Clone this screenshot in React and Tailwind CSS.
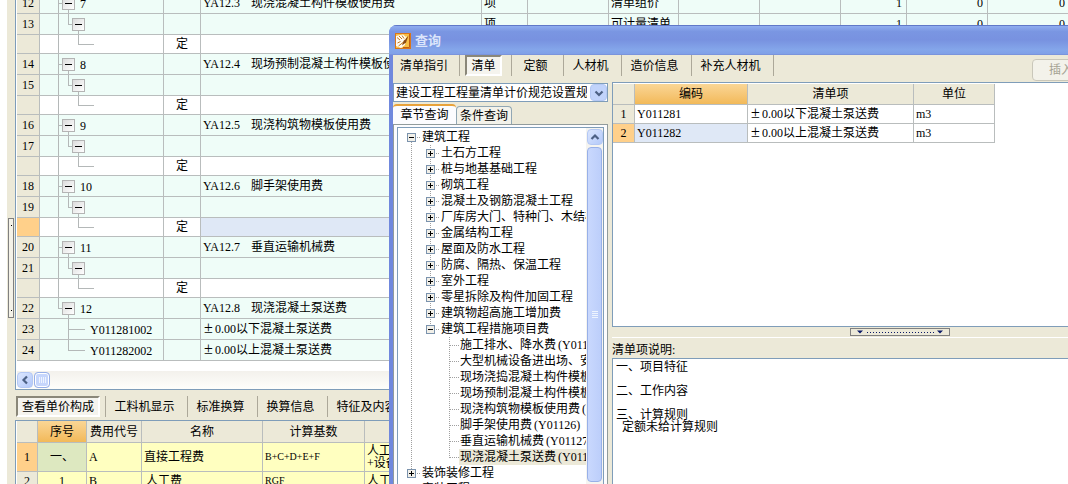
import React from "react";

const LINE = "border-[#b9bdbd]";

const TREE = "stroke-[#b4b8b8]";

function Minus({ className = "" }) {
  return (
    <button
      type="button"
      aria-label="折叠"
      className={`flex size-[13px] shrink-0 items-center justify-center border border-[#b4b4b4] bg-gradient-to-br from-[#dcdcdc] to-white ${className}`}
    >
      <span className="h-px w-[7px] bg-black" />
    </button>
  );
}

function GroupCell({ label, last }) {
  return (
    <div className="relative flex h-5 items-center pl-[3px]">
      <svg className="absolute -left-px top-0 h-5 w-6" shapeRendering="crispEdges" fill="none" aria-hidden="true">
        <path className={TREE} d={last ? "M0.5 0V10.5H4M10.5 16V21" : "M0.5 0V21M0 10.5H4M10.5 16V21"} />
      </svg>
      <Minus className="relative" />
      <span className="ml-[5px] pt-0.5">{label}</span>
    </div>
  );
}

function SubCell() {
  return (
    <div className="relative flex h-5 items-center pl-[13px]">
      <svg className="absolute -left-px top-0 h-5 w-8" shapeRendering="crispEdges" fill="none" aria-hidden="true">
        <path className={TREE} d="M0.5 0V21M10.5 0V10.5H14M20.5 16V21" />
      </svg>
      <Minus className="relative" />
    </div>
  );
}

function StemCell() {
  return (
    <svg className="-ml-px block h-[18px] w-10" shapeRendering="crispEdges" fill="none" aria-hidden="true">
      <path className={TREE} d="M0.5 0V18M20.5 0V9.5H36" />
    </svg>
  );
}

function LeafCell({ label, last }) {
  return (
    <div className="relative flex h-5 items-center pl-[31px]">
      <svg className="absolute -left-px top-0 h-5 w-8" shapeRendering="crispEdges" fill="none" aria-hidden="true">
        <path className={TREE} d={last ? "M10.5 0V10.5H27" : "M10.5 0V21M10.5 10.5H27"} />
      </svg>
      <span className="pt-0.5">{label}</span>
    </div>
  );
}

const PLUS_MINUS = <span className="inline-block w-3 pl-px text-[16px] leading-3">±</span>;

const groups = [
  [12, 7, 13, "YA12.3", "现浇混凝土构件模板使用费"],
  [14, 8, 15, "YA12.4", "现场预制混凝土构件模板使用费"],
  [16, 9, 17, "YA12.5", "现浇构筑物模板使用费"],
  [18, 10, 19, "YA12.6", "脚手架使用费"],
  [20, 11, 21, "YA12.7", "垂直运输机械费"],
];

const rows = groups.flatMap(([a, n, b, code, name], i) => [
  { no: a, kind: "group", label: n, code, name, mode: "清单组价" },
  { no: b, kind: "sub", mode: "可计量清单" },
  { kind: "stem", selected: i === 3 },
]);
rows.push({ no: 22, kind: "group", label: 12, code: "YA12.8", name: "现浇混凝土泵送费", last: true, mode: "清单组价" });
rows.push({ no: 23, kind: "leaf", label: "Y011281002", plain: "0.00以下混凝土泵送费", mode: "可计量清单" });
rows.push({ no: 24, kind: "leaf", label: "Y011282002", plain: "0.00以上混凝土泵送费", last: true, mode: "可计量清单" });

function MainRow({ r }) {
  const stem = r.kind === "stem";
  const h = stem ? "h-[19px]" : "h-[21px]";
  const cell = `border-b border-r ${LINE} p-0`;
  return (
    <tr className={`${h} ${stem ? "bg-white" : "bg-[#effdf8]"}`}>
      <th className={`${cell} font-normal ${r.selected ? "bg-[#ffd08a]" : "bg-[#ece9d8]"}`}>{r.no}</th>
      <td className={`border-b ${LINE} p-0`} />
      <td className={cell}>
        {r.kind === "group" && <GroupCell label={r.label} last={r.last} />}
        {r.kind === "sub" && <SubCell />}
        {stem && <StemCell />}
        {r.kind === "leaf" && <LeafCell label={r.label} last={r.last} />}
      </td>
      <td className={`${cell} text-center`}>{stem ? "定" : ""}</td>
      <td className={`${cell} pl-0.5 ${r.selected ? "bg-[#dfe8f6]" : ""}`}>
        {r.code && (
          <span className="flex">
            <span className="w-12">{r.code}</span>
            {r.name}
          </span>
        )}
        {r.plain && <>{PLUS_MINUS}{r.plain}</>}
      </td>
      <td className={`${cell} pl-0.5`}>{stem ? "" : "项"}</td>
      <td className={cell} />
      <td className={`${cell} pl-0.5`}>{r.mode}</td>
      <td className={cell} />
      <td className={cell} />
      <td className={`${cell} pr-1 text-right`}>{stem ? "" : 1}</td>
      <td className={`${cell} pr-1 text-right`}>{stem ? "" : 0}</td>
      <td className={`${cell} pr-1 text-right`}>{stem ? "" : 0}</td>
    </tr>
  );
}

function MainGrid() {
  return (
    <div className="flex h-[390px] shrink-0 flex-col overflow-hidden border-b border-l border-[#7f9db9] bg-white pl-px">
      <div className="min-h-0 flex-1 overflow-hidden">
        <table className="-mt-[7px] w-[1053px] table-fixed border-separate border-spacing-0">
          <colgroup>
            <col className="w-[23px]" />
            <col className="w-[19px]" />
            <col className="w-[105px]" />
            <col className="w-[37px]" />
            <col className="w-[281px]" />
            <col className="w-[46px]" />
            <col className="w-[81px]" />
            <col className="w-[70px]" />
            <col className="w-[81px]" />
            <col className="w-[81px]" />
            <col className="w-[66px]" />
            <col className="w-[81px]" />
            <col className="w-[82px]" />
          </colgroup>
          <tbody>
            {rows.map((r, i) => (
              <MainRow key={i} r={r} />
            ))}
          </tbody>
        </table>
      </div>
      <div className="flex h-[18px] items-center gap-px bg-gradient-to-b from-[#f3f1ec] to-[#fefefb]">
        <ScrollButton dir="left" />
        <span className="flex size-4 items-center justify-center gap-px rounded-sm border border-[#98b0e8] bg-[#c6d6fc] ring-1 ring-inset ring-white">
          {[0, 1, 2, 3].map((i) => (
            <i key={i} className="h-1.5 w-px bg-[#eef4fe]" />
          ))}
        </span>
      </div>
    </div>
  );
}

const ARROWS = {
  left: "M9 3.5L5.5 7L9 10.5",
  up: "M3.5 9L7 5.5L10.5 9",
  down: "M3.5 5.5L7 9L10.5 5.5",
};

function ScrollButton({ dir }) {
  return (
    <button
      type="button"
      aria-label={dir}
      className="flex size-4 shrink-0 items-center justify-center rounded-sm border border-[#b4c8f4] bg-gradient-to-br from-[#dbe6fe] to-[#b4c9f9]"
    >
      <svg className="size-[14px]" viewBox="0 0 14 14" fill="none" stroke="#4d6185" strokeWidth="2.2" aria-hidden="true">
        <path d={ARROWS[dir]} />
      </svg>
    </button>
  );
}

function BarItem({ children, active, className }) {
  return (
    <div className={`flex h-[21px] items-center justify-center border-r border-[#aca899] pr-1 ${className}`}>
      <button
        type="button"
        className={`h-full whitespace-nowrap ${
          active ? "border-2 border-[#8a8779] border-r-white border-b-white bg-[#f5f4ee] px-1" : ""
        }`}
      >
        {children}
      </button>
    </div>
  );
}

function PriceTabs() {
  return (
    <div className="flex h-[30px] shrink-0 items-end pb-[3px]">
      <BarItem active className="w-[91px]">查看单价构成</BarItem>
      <BarItem className="w-[82px]">工料机显示</BarItem>
      <BarItem className="w-[70px]">标准换算</BarItem>
      <BarItem className="w-[70px]">换算信息</BarItem>
      <BarItem className="w-[82px]">特征及内容</BarItem>
    </div>
  );
}

function PriceGrid() {
  const head = `border-b border-r ${LINE} bg-[#ece9d8] p-0 font-normal`;
  const cell = `border-b border-r ${LINE} bg-[#ffffc0] p-0`;
  return (
    <div className="min-h-0 flex-1 overflow-hidden border-l border-t border-[#7f9db9] bg-white pl-px">
      <table className="w-[1053px] table-fixed border-separate border-spacing-0">
        <colgroup>
          <col className="w-[21px]" />
          <col className="w-[49px]" />
          <col className="w-[55px]" />
          <col className="w-[121px]" />
          <col className="w-[102px]" />
          <col />
        </colgroup>
        <thead>
          <tr className="h-[22px]">
            <th className={head} />
            <th className={`border-b border-r ${LINE} bg-gradient-to-b from-[#fad695] to-[#f2b958] p-0 font-normal`}>序号</th>
            <th className={head}>费用代号</th>
            <th className={head}>名称</th>
            <th className={head}>计算基数</th>
            <th className={head} />
          </tr>
        </thead>
        <tbody>
          <tr className="h-[29px]">
            <th className={`border-b border-r ${LINE} bg-[#ffd08a] p-0 font-normal`}>1</th>
            <td className={`border-b border-r ${LINE} bg-[#dde8c0] p-0 text-center`}>一、</td>
            <td className={`${cell} pl-0.5`}>A</td>
            <td className={`${cell} pl-0.5`}>直接工程费</td>
            <td className={`${cell} pl-0.5 text-[10px]`}>B+C+D+E+F</td>
            <td className={`${cell} pl-0.5 leading-3`}>
              人工费+材料费
              <br />
              +设备费
            </td>
          </tr>
          <tr className="h-[19px]">
            <th className={head}>2</th>
            <td className={`${cell} text-center`}>1</td>
            <td className={`${cell} pl-0.5`}>B</td>
            <td className={`${cell} pl-1`}>人工费</td>
            <td className={`${cell} pl-0.5 text-[10px]`}>RGF</td>
            <td className={`${cell} pl-0.5`}>人工费</td>
          </tr>
        </tbody>
      </table>
    </div>
  );
}

function AppIcon() {
  return (
    <svg className="size-4" viewBox="0 0 16 16" aria-hidden="true">
      <rect width="16" height="16" fill="#d9761a" />
      <rect x="1" y="1" width="14" height="14" fill="#f9bf45" />
      <path d="M1 3L8 1.5L11 4L10 12L6 15L1 13Z" fill="#fffaf0" />
      <path d="M2 4.5L5 7M4 3L7 6M7 2.5L9 5.5M2.5 10L5.5 8.5M3.5 13L8 9.5" stroke="#c77a1e" strokeWidth="1" fill="none" />
      <path d="M13.5 2.5L8.5 8L7 12.5L11 9.5Z" fill="#8c4a12" />
      <path d="M12 3L9.5 7" stroke="#fff1c0" strokeWidth="0.8" />
      <path d="M14.5 1V14.5H8" stroke="#c25f12" fill="none" />
    </svg>
  );
}

function Expander({ open }) {
  return (
    <svg className="size-[9px] shrink-0" viewBox="0 0 9 9" shapeRendering="crispEdges" aria-hidden="true">
      <rect x="0.5" y="0.5" width="8" height="8" fill="#f1efe8" stroke="#7b93ad" />
      <path d={open ? "M2 4.5H7" : "M2 4.5H7M4.5 2V7"} stroke="#000" />
    </svg>
  );
}

const branches = [
  "土石方工程",
  "桩与地基基础工程",
  "砌筑工程",
  "混凝土及钢筋混凝土工程",
  "厂库房大门、特种门、木结构工程",
  "金属结构工程",
  "屋面及防水工程",
  "防腐、隔热、保温工程",
  "室外工程",
  "零星拆除及构件加固工程",
  "建筑物超高施工增加费",
];

const leaves = [
  ["施工排水、降水费", "(Y01121)"],
  ["大型机械设备进出场、安拆费", "(Y01122)"],
  ["现场浇捣混凝土构件模板使用费", ""],
  ["现场预制混凝土构件模板使用费", ""],
  ["现浇构筑物模板使用费", "(Y01125)"],
  ["脚手架使用费", "(Y01126)"],
  ["垂直运输机械费", "(Y01127)"],
  ["现浇混凝土泵送费", "(Y01128)"],
];

function TreeRow({ depth, open, leaf, selected, children }) {
  const pad = ["pl-[9px]", "pl-7", "pl-[51px]"][depth];
  return (
    <li className={`flex h-4 items-center ${pad}`}>
      {!leaf && <Expander open={open} />}
      <span className={`shrink-0 border-t border-dotted border-[#a0a0a0] ${leaf ? "w-2.5" : "mx-px w-[3px]"}`} />
      <button type="button" className={`h-4 shrink-0 whitespace-nowrap pl-px text-left ${selected ? "bg-[#ece9d8]" : ""}`}>
        {children}
      </button>
    </li>
  );
}

function ChapterTree() {
  return (
    <div className="flex min-h-0 flex-1 border border-b-0 border-[#7f9db9] bg-white">
      <div className="relative min-w-0 flex-1 overflow-hidden pt-px">
        <svg className="absolute left-0 top-0 h-full w-14" shapeRendering="crispEdges" fill="none" aria-hidden="true">
          <path d="M13.5 14V342M32.5 17V198M51.5 209V329" stroke="#a0a0a0" strokeDasharray="1 1" />
        </svg>
        <ul className="relative">
          <TreeRow depth={0} open>建筑工程</TreeRow>
          {branches.map((b) => (
            <TreeRow key={b} depth={1}>{b}</TreeRow>
          ))}
          <TreeRow depth={1} open>建筑工程措施项目费</TreeRow>
          {leaves.map(([name, code], i) => (
            <TreeRow key={name} depth={2} leaf selected={i === leaves.length - 1}>
              {name}
              <span className="ml-0.5">{code}</span>
            </TreeRow>
          ))}
          <TreeRow depth={0}>装饰装修工程</TreeRow>
          <TreeRow depth={0}>安装工程</TreeRow>
        </ul>
      </div>
      <div className="flex w-[17px] flex-col items-center gap-0.5 bg-[#f5f4f0] pt-px">
        <ScrollButton dir="up" />
        <span className="mb-0.5 flex w-[15px] flex-1 flex-col items-center justify-center gap-px rounded-sm border border-[#98b0e8] bg-gradient-to-r from-[#c9d8fd] to-[#bccefa]">
          {[0, 1, 2, 3].map((i) => (
            <i key={i} className="h-px w-1.5 bg-[#eef4fe]" />
          ))}
        </span>
      </div>
    </div>
  );
}

function ResultGrid() {
  const head = `border-b border-r ${LINE} bg-[#ece9d8] p-0 font-normal`;
  const cell = `border-b border-r ${LINE} p-0 pl-0.5`;
  const items = [
    ["Y011281", "0.00以下混凝土泵送费"],
    ["Y011282", "0.00以上混凝土泵送费"],
  ];
  return (
    <div className="h-[245px] shrink-0 border-b border-l border-t border-[#7f9db9] bg-white pt-px">
      <table className="w-[382px] table-fixed border-separate border-spacing-0">
        <colgroup>
          <col className="w-[22px]" />
          <col className="w-[113px]" />
          <col className="w-[166px]" />
          <col className="w-[81px]" />
        </colgroup>
        <thead>
          <tr className="h-[21px]">
            <th className={head} />
            <th className={`border-b border-r ${LINE} bg-gradient-to-b from-[#fad695] to-[#f2b958] p-0 font-normal`}>编码</th>
            <th className={head}>清单项</th>
            <th className={head}>单位</th>
          </tr>
        </thead>
        <tbody>
          {items.map(([code, name], i) => (
            <tr key={code} className="h-[19px]">
              <th className={`border-b border-r ${LINE} p-0 font-normal ${i ? "bg-[#ffd08a]" : "bg-[#ece9d8]"}`}>{i + 1}</th>
              <td className={`${cell} ${i ? "bg-[#dfe8f6]" : ""}`}>{code}</td>
              <td className={cell}>{PLUS_MINUS}{name}</td>
              <td className={cell}>m3</td>
            </tr>
          ))}
        </tbody>
      </table>
    </div>
  );
}

function QueryDialog() {
  return (
    <section
      aria-label="查询"
      className="absolute bottom-0 left-[389px] right-0 top-[25px] flex flex-col overflow-hidden rounded-tl-lg bg-[#7088dd]"
    >
      <header className="flex h-[30px] shrink-0 items-center gap-1 border-b border-t border-b-[#7a94dc] border-t-[#6078c8] bg-[linear-gradient(to_bottom,#8fadf0_0%,#7a96e2_20%,#7892e0_50%,#84a6ea_85%,#80a0e8_100%)] pl-1.5 pt-0.5">
        <AppIcon />
        <h1 className="text-[13px] font-bold text-[#dbe5fb]">查询</h1>
      </header>
      <div className="ml-1 flex min-h-0 flex-1 flex-col bg-[#ece9d8]">
        <nav className="flex h-[27px] shrink-0 items-start">
          <BarItem className="w-[67px]">清单指引</BarItem>
          <BarItem active className="w-[52px]">清单</BarItem>
          <BarItem className="w-[52px]">定额</BarItem>
          <BarItem className="w-[58px]">人材机</BarItem>
          <BarItem className="w-[70px]">造价信息</BarItem>
          <BarItem className="w-[82px]">补充人材机</BarItem>
          <div className="ml-auto w-9 overflow-hidden pt-1">
            <button type="button" disabled className="h-[22px] w-16 rounded-sm border border-[#c9c7ba] bg-[#f3f2ea] pl-4 text-left text-[#a5a293]">
              插入
            </button>
          </div>
        </nav>
        <div className="flex min-h-0 flex-1 gap-1">
          <div className="flex w-[215px] shrink-0 flex-col pt-px">
            <div className="relative h-[19px] shrink-0">
              <select aria-label="规范" className="h-[19px] w-full appearance-none border border-[#7f9db9] bg-white pl-0.5 pr-5">
                <option>建设工程工程量清单计价规范设置规则</option>
              </select>
              <span className="pointer-events-none absolute right-px top-px flex size-[17px] items-center justify-center rounded-sm border border-[#b4c8f4] bg-[#c1d3fb]">
                <svg className="size-[14px]" viewBox="0 0 14 14" fill="none" stroke="#4d6185" strokeWidth="2.2" aria-hidden="true">
                  <path d={ARROWS.down} />
                </svg>
              </span>
            </div>
            <div role="tablist" className="flex h-[22px] shrink-0 items-end pt-0.5">
              <button type="button" role="tab" aria-selected="true" className="h-5 w-[63px] rounded-t-sm border-t-2 border-[#e8a23a] bg-[#fcfcfe]">
                章节查询
              </button>
              <button type="button" role="tab" aria-selected="false" className="h-[18px] w-14 rounded-t-sm border border-b-0 border-[#91a7b4] bg-[#f3f2ea]">
                条件查询
              </button>
            </div>
            <div className="flex min-h-0 flex-1 flex-col border-l border-r border-t border-[#919b9c] bg-[#fcfcfe] px-[3px] pt-0.5">
              <ChapterTree />
            </div>
          </div>
          <div className="flex min-w-0 flex-1 flex-col">
            <ResultGrid />
            <div className="flex h-[11px] shrink-0 items-center justify-center border-b border-white pl-[119px]">
              <button type="button" aria-label="折叠说明" className="flex h-2 w-[100px] items-center justify-center border border-[#808080]">
                <svg className="h-1.5 w-[90px]" viewBox="0 0 90 6" aria-hidden="true">
                  <path d="M2 1.5H8L5 4.5ZM82 1.5H88L85 4.5Z" fill="#0a1a66" />
                  <path d="M12 3.5H79" stroke="#0a1a66" strokeDasharray="1 2" shapeRendering="crispEdges" />
                </svg>
              </button>
            </div>
            <label htmlFor="note" className="h-5 shrink-0 pt-1">清单项说明:</label>
            <textarea
              id="note"
              readOnly
              className="min-h-0 flex-1 resize-none overflow-hidden border-l border-t border-[#7f9db9] bg-white pl-[3px] pt-0.5 leading-3"
              defaultValue={"一、项目特征\n\n二、工作内容\n\n三、计算规则\n  定额未给计算规则"}
            />
          </div>
        </div>
      </div>
    </section>
  );
}

export default function App() {
  return (
    <div className="relative flex h-screen overflow-hidden bg-white pl-[7px] font-['Liberation_Serif','Noto_Sans_CJK_SC',sans-serif] text-xs leading-4 text-black">
      <div className="w-2 shrink-0 bg-[#ece9d8] pl-px pt-[218px]">
        <button type="button" aria-label="折叠侧栏" className="flex h-[100px] w-1.5 flex-col items-center justify-between border border-[#808080] bg-[#f4f2e8] py-1.5">
          <i className="size-px bg-black" />
          <i className="size-px bg-black" />
        </button>
      </div>
      <main className="flex min-w-0 flex-1 flex-col overflow-hidden bg-[#ece9d8]">
        <MainGrid />
        <PriceTabs />
        <PriceGrid />
      </main>
      <QueryDialog />
    </div>
  );
}
